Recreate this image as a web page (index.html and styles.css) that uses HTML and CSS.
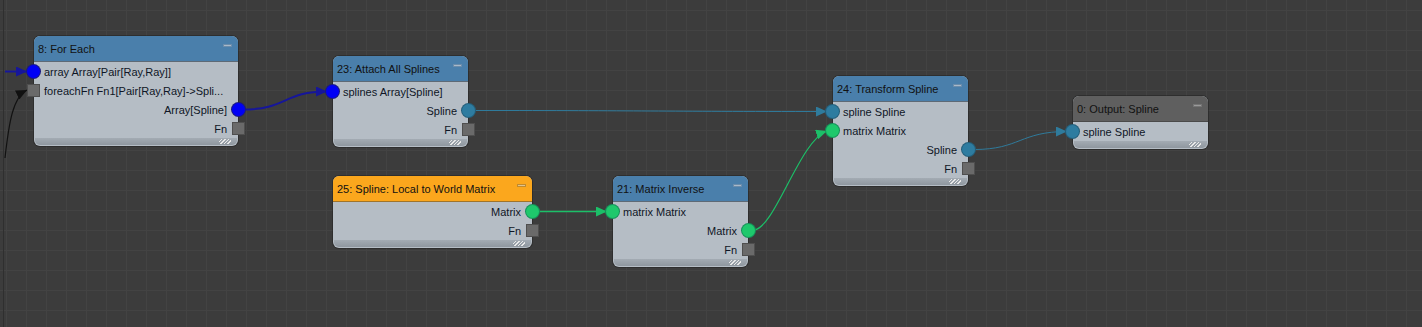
FILE: index.html
```html
<!DOCTYPE html>
<html>
<head>
<meta charset="utf-8">
<link rel="stylesheet" href="styles.css">
</head>
<body>
<div class="canvas">
  <svg class="edges" width="1422" height="327" viewBox="0 0 1422 327">
    <defs>
      <marker id="ah-blue" markerUnits="userSpaceOnUse" markerWidth="12" markerHeight="10" refX="11" refY="5" orient="auto"><path d="M0,0 L11,5 L0,10 Z" fill="#16169a"/></marker>
      <marker id="ah-black" markerUnits="userSpaceOnUse" markerWidth="12" markerHeight="10" refX="11" refY="5" orient="auto"><path d="M0,0 L11,5 L0,10 Z" fill="#111"/></marker>
      <marker id="ah-teal" markerUnits="userSpaceOnUse" markerWidth="12" markerHeight="10" refX="11" refY="5" orient="auto"><path d="M0,0 L11,5 L0,10 Z" fill="#2f7b9c"/></marker>
      <marker id="ah-green" markerUnits="userSpaceOnUse" markerWidth="12" markerHeight="10" refX="11" refY="5" orient="auto"><path d="M0,0 L11,5 L0,10 Z" fill="#1cbf68"/></marker>
    </defs>
    <path d="M5,71.5 L27,71.5" stroke="#16169a" stroke-width="2" fill="none" marker-end="url(#ah-blue)"/>
    <path d="M5,158 C9,122 13,97 27,90" stroke="#111" stroke-width="1.2" fill="none" marker-end="url(#ah-black)"/>
    <path d="M244,109.5 C286,109.5 284,91.5 327,91.5" stroke="#16169a" stroke-width="2" fill="none" marker-end="url(#ah-blue)"/>
    <path d="M474,110.5 C650,110.5 650,111.5 827,111.5" stroke="#2f7b9c" stroke-width="1" fill="none" marker-end="url(#ah-teal)"/>
    <path d="M538,211.5 L607,211.5" stroke="#1cbf68" stroke-width="1.3" fill="none" marker-end="url(#ah-green)"/>
    <path d="M754,230 C775,228 800,140 827,131" stroke="#1cbf68" stroke-width="1.2" fill="none" marker-end="url(#ah-green)"/>
    <path d="M974,149.5 C1020,149.5 1020,131.5 1067,131.5" stroke="#2f7b9c" stroke-width="1" fill="none" marker-end="url(#ah-teal)"/>
  </svg>

  <div class="node n8">
    <div class="hdr blue"><span class="title">8: For Each</span><i class="min"></i></div>
    <div class="row in"><span class="port dot c-blue"></span>array Array[Pair[Ray,Ray]]</div>
    <div class="row in"><span class="port sq"></span>foreachFn Fn1[Pair[Ray,Ray]-&gt;Spli...</div>
    <div class="row out">Array[Spline]<span class="port dot c-blue"></span></div>
    <div class="row out">Fn<span class="port sq"></span></div>
    <div class="foot"></div>
  </div>

  <div class="node n23">
    <div class="hdr blue"><span class="title">23: Attach All Splines</span><i class="min"></i></div>
    <div class="row in"><span class="port dot c-blue"></span>splines Array[Spline]</div>
    <div class="row out">Spline<span class="port dot c-teal"></span></div>
    <div class="row out">Fn<span class="port sq"></span></div>
    <div class="foot"></div>
  </div>

  <div class="node n25">
    <div class="hdr orange"><span class="title">25: Spline: Local to World Matrix</span><i class="min"></i></div>
    <div class="row out">Matrix<span class="port dot c-green"></span></div>
    <div class="row out">Fn<span class="port sq"></span></div>
    <div class="foot"></div>
  </div>

  <div class="node n21">
    <div class="hdr blue"><span class="title">21: Matrix Inverse</span><i class="min"></i></div>
    <div class="row in"><span class="port dot c-green"></span>matrix Matrix</div>
    <div class="row out">Matrix<span class="port dot c-green"></span></div>
    <div class="row out">Fn<span class="port sq"></span></div>
    <div class="foot"></div>
  </div>

  <div class="node n24">
    <div class="hdr blue"><span class="title">24: Transform Spline</span><i class="min"></i></div>
    <div class="row in"><span class="port dot c-teal"></span>spline Spline</div>
    <div class="row in"><span class="port dot c-green"></span>matrix Matrix</div>
    <div class="row out">Spline<span class="port dot c-teal"></span></div>
    <div class="row out">Fn<span class="port sq"></span></div>
    <div class="foot"></div>
  </div>

  <div class="node n0">
    <div class="hdr grey"><span class="title">0: Output: Spline</span><i class="min"></i></div>
    <div class="row in"><span class="port dot c-teal"></span>spline Spline</div>
    <div class="foot"></div>
  </div>
</div>
</body>
</html>
```
FILE: styles.css
```css
* { box-sizing: border-box; }
html, body { margin: 0; padding: 0; }
body {
  width: 1422px;
  height: 327px;
  overflow: hidden;
  background: #3c3c3c;
  font-family: "Liberation Sans", Arial, sans-serif;
}
.canvas {
  position: relative;
  width: 1422px;
  height: 327px;
  overflow: hidden;
  background-color: #3c3c3c;
  background-image:
    linear-gradient(to right, #2f2f2f 0, #2f2f2f 1px, transparent 1px),
    repeating-linear-gradient(to right, transparent 0, transparent 6px, #434343 6px, #434343 7px, transparent 7px, transparent 20px),
    repeating-linear-gradient(to bottom, transparent 0, transparent 10px, #434343 10px, #434343 11px, transparent 11px, transparent 20px);
  background-size: 1px 327px, auto, auto;
  background-position: 3px 0, 0 0, 0 0;
  background-repeat: no-repeat, repeat, repeat;
}
.edges {
  position: absolute;
  left: 0;
  top: 0;
  z-index: 1;
}
.node {
  position: absolute;
  z-index: 2;
  display: flex;
  flex-direction: column;
  background: #b5bdc5;
  border-radius: 6px;
  box-shadow: 0 0 0 1px rgba(20, 20, 20, 0.35);
  font-size: 11px;
  color: #0f1626;
}
.n8 { left: 34px; top: 36px; width: 204px; }
.n23 { left: 333px; top: 56px; width: 135px; }
.n25 { left: 333px; top: 176px; width: 199px; }
.n21 { left: 613px; top: 176px; width: 135px; }
.n24 { left: 833px; top: 76px; width: 135px; }
.n0 { left: 1073px; top: 96px; width: 135px; }

.hdr {
  height: 26px;
  display: flex;
  align-items: center;
  padding: 0 6px 0 4px;
  border-radius: 6px 6px 0 0;
  border-bottom: 1px solid #5e6a76;
  position: relative;
  color: #111;
  font-size: 11px;
}
.hdr.blue { background: #4a7fab; }
.hdr.orange { background: #fba71d; border-bottom-color: #a0742a; }
.hdr.grey { background: #5f5f5f; border-bottom-color: #4a4a4a; }
.title { flex: 1; white-space: nowrap; }
.min {
  position: absolute;
  right: 6px;
  top: 8px;
  width: 9px;
  height: 3px;
  background: #a9b9c9;
  border: 1px solid #6a8cab;
}
.hdr.orange .min { background: #e0c48e; border-color: #c08a2e; }
.hdr.grey .min { background: #9a9a9a; border-color: #747474; }

.row {
  position: relative;
  height: 19px;
  display: flex;
  align-items: center;
  white-space: nowrap;
}
.row.in { padding-left: 10px; }
.row.out { justify-content: flex-end; padding-right: 11px; }

.port {
  position: absolute;
  top: 3px;
  width: 13px;
  height: 13px;
}
.row.in .port { left: -7px; }
.row.out .port { right: -7px; }
.dot { border-radius: 50%; }
.c-blue { background: #0000f5; box-shadow: 0 0 0 1px #1a1a80; }
.c-teal { background: #2e7ca0; box-shadow: 0 0 0 1px #245f7a; }
.c-green { background: #1ec86c; box-shadow: 0 0 0 1px #16915a; }
.sq {
  background: #6a6a6a;
  border: 1px solid #4f4f4f;
}

.foot {
  height: 7px;
  margin: 0 1px 1px;
  border-radius: 0 0 5px 5px;
  background:
    repeating-linear-gradient(135deg, transparent 0, transparent 1.5px, #e8e8e8 1.5px, #e8e8e8 2.5px) right 6px top 1px / 12px 5px no-repeat,
    linear-gradient(#a3abb3, #8f979f);
}
```
